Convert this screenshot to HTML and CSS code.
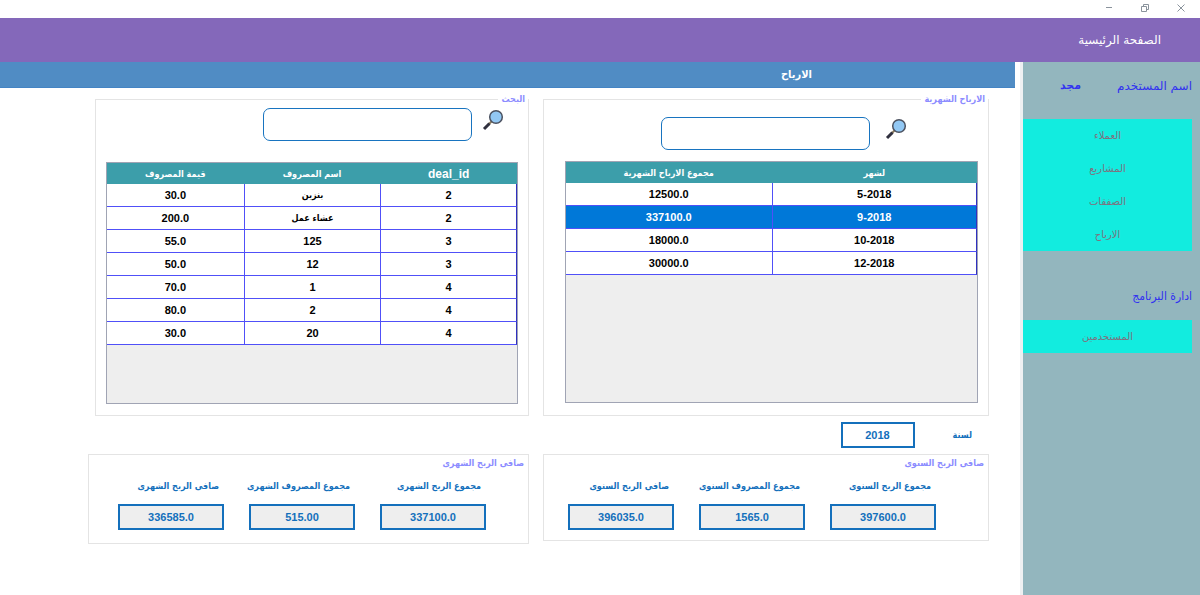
FILE: index.html
```
<!DOCTYPE html>
<html lang="ar" dir="rtl">
<head>
<meta charset="utf-8">
<title>الارباح</title>
<link rel="stylesheet" href="styles.css">
</head>
<body>
<div class="window">
  <div class="titlebar">
    <button class="winbtn" aria-label="اغلاق"><svg width="8" height="8" viewBox="0 0 8 8"><path d="M0.5 0.5L7.5 7.5M7.5 0.5L0.5 7.5"/></svg></button>
    <button class="winbtn" aria-label="استعادة"><svg width="8" height="8" viewBox="0 0 8 8"><path d="M0.5 2.5h5v5h-5zM2.5 2.5v-2h5v5h-2"/></svg></button>
    <button class="winbtn" aria-label="تصغير"><svg width="8" height="8" viewBox="0 0 8 8"><path d="M1 3.5h6"/></svg></button>
  </div>
  <header class="header"><h1>الصفحة الرئيسية</h1></header>
  <div class="body">
    <aside class="sidebar">
      <div class="user"><span>اسم المستخدم</span><b class="user-name">مجد</b></div>
      <nav class="menu">
        <button>العملاء</button>
        <button>المشاريع</button>
        <button>الصفقات</button>
        <button>الارباح</button>
      </nav>
      <h2 class="side-title">ادارة البرنامج</h2>
      <nav class="menu">
        <button>المستخدمين</button>
      </nav>
    </aside>
    <main class="main">
      <h2 class="banner">الارباح</h2>
      <div class="content">
        <fieldset class="panel panel-profits">
          <legend>الارباح الشهرية</legend>
          <div class="search">
            <svg class="lens" width="22" height="22" viewBox="0 0 22 22"><path d="M10 12L6 16" stroke="#8a7a5c" stroke-width="2"/><path d="M7.5 14.5L2 20" stroke="#30303e" stroke-width="3"/><circle cx="14" cy="8" r="6.3" fill="#92c8f4" stroke="#4c5260" stroke-width="1.5"/></svg>
            <input type="text" class="search-box" aria-label="بحث الارباح">
          </div>
          <div class="table-wrap">
            <table class="data">
              <thead><tr><th>لشهر</th><th>مجموع الارباح الشهرية</th></tr></thead>
              <tbody>
                <tr><td>5-2018</td><td>12500.0</td></tr>
                <tr class="selected"><td>9-2018</td><td>337100.0</td></tr>
                <tr><td>10-2018</td><td>18000.0</td></tr>
                <tr><td>12-2018</td><td>30000.0</td></tr>
              </tbody>
            </table>
          </div>
        </fieldset>
        <fieldset class="panel panel-search">
          <legend>البحث</legend>
          <div class="search">
            <svg class="lens" width="22" height="22" viewBox="0 0 22 22"><path d="M10 12L6 16" stroke="#8a7a5c" stroke-width="2"/><path d="M7.5 14.5L2 20" stroke="#30303e" stroke-width="3"/><circle cx="14" cy="8" r="6.3" fill="#92c8f4" stroke="#4c5260" stroke-width="1.5"/></svg>
            <input type="text" class="search-box" aria-label="البحث">
          </div>
          <div class="table-wrap">
            <table class="data">
              <thead><tr><th class="latin">deal_id</th><th>اسم المصروف</th><th>قيمة المصروف</th></tr></thead>
              <tbody>
                <tr><td>2</td><td class="name">بنزين</td><td>30.0</td></tr>
                <tr><td>2</td><td class="name">عشاء عمل</td><td>200.0</td></tr>
                <tr><td>3</td><td>125</td><td>55.0</td></tr>
                <tr><td>3</td><td>12</td><td>50.0</td></tr>
                <tr><td>4</td><td>1</td><td>70.0</td></tr>
                <tr><td>4</td><td>2</td><td>80.0</td></tr>
                <tr><td>4</td><td>20</td><td>30.0</td></tr>
              </tbody>
            </table>
          </div>
        </fieldset>
        <div class="year">
          <label for="year">لسنة</label>
          <input type="text" id="year" class="value year-value" value="2018">
        </div>
        <section class="totals totals-year">
          <h3>صافى الربح السنوى</h3>
          <div class="stats">
            <label class="stat"><span>مجموع الربح السنوى</span><input type="text" class="value" value="397600.0" readonly></label>
            <label class="stat"><span>مجموع المصروف السنوى</span><input type="text" class="value" value="1565.0" readonly></label>
            <label class="stat"><span>صافى الربح السنوى</span><input type="text" class="value" value="396035.0" readonly></label>
          </div>
        </section>
        <section class="totals totals-month">
          <h3>صافى الربح الشهرى</h3>
          <div class="stats">
            <label class="stat"><span>مجموع الربح الشهرى</span><input type="text" class="value" value="337100.0" readonly></label>
            <label class="stat"><span>مجموع المصروف الشهرى</span><input type="text" class="value" value="515.00" readonly></label>
            <label class="stat"><span>صافى الربح الشهرى</span><input type="text" class="value" value="336585.0" readonly></label>
          </div>
        </section>
      </div>
    </main>
  </div>
</div>
</body>
</html>
```
FILE: styles.css
```
* { box-sizing: border-box; }
body {
  margin: 0;
  background: #fff;
  font: bold 9px/16px "DejaVu Sans Condensed", "DejaVu Sans", sans-serif;
}
h1, h2, h3 { margin: 0; font-size: inherit; }
button, input { font: inherit; color: inherit; }
.window { display: flex; flex-direction: column; min-height: 100vh; }
.titlebar {
  display: flex;
  align-items: center;
  gap: 28px;
  height: 18px;
  padding: 0 15px 2px;
}
.winbtn {
  display: flex;
  padding: 0;
  border: 0;
  background: none;
}
.winbtn svg { fill: none; stroke: #8a939c; stroke-width: 1; }
.header {
  display: flex;
  align-items: center;
  height: 44px;
  padding: 0 39px;
  background: #8468ba;
  color: #fff;
}
.header h1 { font: 12px/16px "DejaVu Sans", sans-serif; }
.body { display: flex; flex: 1; gap: 5px; }

.sidebar {
  width: 180px;
  padding: 15px 8px 0 0;
  border-left: 3px solid #eef0f2;
  background: #93b6be;
  font: 12px/18px "DejaVu Sans", sans-serif;
}
.user { display: flex; gap: 36px; color: #3232f0; }
.user-name { font-size: 11px; }
.side-title {
  margin: 36px 0 15px;
  font-family: "DejaVu Sans Condensed", "DejaVu Sans", sans-serif;
  font-weight: normal;
  color: #3232f0;
}
.user + .menu { margin-top: 24px; }
.menu { display: flex; flex-direction: column; background: #12ecdf; }
.menu button {
  height: 33px;
  padding: 0;
  border: 0;
  background: none;
  font-size: 10px;
  color: #7f7280;
}

.main { flex: 1; }
.banner {
  height: 26px;
  padding-right: 203px;
  background: #508cc4;
  border-bottom: 1px solid #4484c4;
  color: #fff;
  font-size: 11px;
  line-height: 26px;
}
.content {
  display: grid;
  grid-template-columns: 446fr 441fr;
  column-gap: 14px;
  padding: 3px 26px 0 88px;
}
.panel {
  display: flex;
  flex-direction: column;
  min-width: 0;
  margin: 0;
  border: 1px solid #e4e4e4;
}
.panel legend { margin-right: -10px; padding: 0 3px; color: #8c8cff; }
.panel-profits { padding: 10px 10px 12px 21px; }
.panel-search { margin-left: 7px; padding: 1px 10px 10px; }
.search { display: flex; gap: 15px; padding-right: 71px; }
.panel-search .search { gap: 10px; padding-right: 14px; }
.lens { flex: none; margin-top: 1px; fill: none; }
.search-box {
  width: 209px;
  height: 33px;
  padding: 0 10px;
  border: 1px solid #1874c0;
  border-radius: 7px;
  background: #fff;
}
.table-wrap {
  height: 242px;
  margin-top: 11px;
  border: 1px solid #a0a4b4;
  background: #eeeeee;
}
.panel-search .table-wrap { margin-top: 21px; }
.data {
  width: 100%;
  table-layout: fixed;
  border-collapse: separate;
  border-spacing: 0;
  text-align: center;
}
.data th { height: 21px; padding: 0; background: #3c9eaa; color: #fff; }
.data .latin { font-family: "Liberation Sans", sans-serif; font-size: 12px; }
.data td {
  height: 23px;
  padding: 0;
  border-left: 1px solid #5050f8;
  border-bottom: 1px solid #5050f8;
  background: #fff;
  color: #000;
  font-family: "Liberation Sans", sans-serif;
  font-size: 11px;
}
.data .name {
  font-family: "DejaVu Sans Condensed", "DejaVu Sans", sans-serif;
  font-size: 9px;
}
.data td:first-child { border-right: 1px solid #3030c0; }
.data td:last-child { border-left: 0; }
.data .selected td { background: #0078d8; color: #fff; }

.year {
  grid-column: 1 / -1;
  display: flex;
  align-items: center;
  gap: 38px;
  padding: 6px 17px 6px 0;
  color: #1470bc;
}
.value {
  width: 106px;
  height: 26px;
  padding: 0;
  border: 2px solid #1470bc;
  background: #eeeeee;
  color: #1470bc;
  font-family: "Liberation Sans", sans-serif;
  font-size: 11px;
  text-align: center;
}
.year-value { width: 74px; background: #fff; }
.totals { border: 1px solid #e4e4e4; align-self: start; }
.totals h3 { padding-right: 4px; color: #8c8cff; }
.totals-year { padding-bottom: 10px; }
.totals-month { padding-bottom: 13px; }
.stats { display: flex; gap: 25px; margin-top: 7px; padding-right: 52px; }
.totals-month .stats { padding-right: 42px; }
.stat { display: flex; flex-direction: column; gap: 10px; width: 106px; color: #1470bc; }
.stat span { padding-right: 5px; white-space: nowrap; }
```
